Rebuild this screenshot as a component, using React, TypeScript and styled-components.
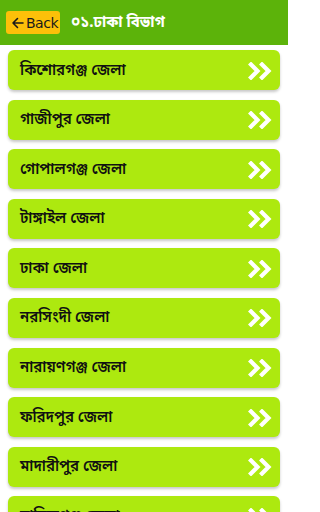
import React from 'react';
import styled, { createGlobalStyle } from 'styled-components';

const GlobalStyle = createGlobalStyle`
  html, body {
    margin: 0;
    padding: 0;
    background: #ffffff;
    font-family: "Noto Sans Bengali", "Noto Sans", "Liberation Sans", sans-serif;
  }
  #root {
    width: 288px;
    height: 512px;
    overflow: hidden;
  }
`;

const Header = styled.div`
  display: flex;
  align-items: center;
  height: 45px;
  padding: 0 6px;
  background: #5cb30a;
  box-sizing: border-box;
`;

const BackButton = styled.button`
  display: flex;
  align-items: center;
  gap: 2px;
  height: 23px;
  width: 54px;
  padding: 0 0 0 5px;
  border: none;
  border-radius: 3px;
  background: #fdc009;
  color: #1a1a1a;
  font-family: "DejaVu Sans", sans-serif;
  font-size: 14px;
  letter-spacing: -0.5px;
  cursor: pointer;
`;

const Title = styled.h1`
  margin: 0 0 0 11px;
  color: #ffffff;
  font-size: 15px;
  font-weight: 700;
`;

const List = styled.div`
  display: flex;
  flex-direction: column;
  gap: 9.6px;
  padding: 5px 8px 0;
`;

const Row = styled.div`
  display: flex;
  align-items: center;
  justify-content: space-between;
  height: 40px;
  padding: 1px 6px 0 12px;
  background: #ade90f;
  border-radius: 6px;
  box-shadow: 0 2px 3px rgba(0, 0, 0, 0.22);
  box-sizing: border-box;
  flex-shrink: 0;
`;

const Label = styled.span`
  color: #111111;
  font-size: 15px;
  font-weight: 600;
`;

const Arrow = () => (
  <svg width="13" height="12" viewBox="0 0 13 12" fill="none">
    <path d="M12 6 H2 M6.5 1.5 L2 6 L6.5 10.5" stroke="#1a1a1a" strokeWidth="1.6" strokeLinecap="round" strokeLinejoin="round" />
  </svg>
);

const Chevrons = () => (
  <svg width="26" height="18" viewBox="0 0 26 18" fill="none">
    <path d="M3 2.5 L9.5 9 L3 15.5" stroke="#fff" strokeWidth="4.2" strokeLinecap="square" />
    <path d="M14 2.5 L20.5 9 L14 15.5" stroke="#fff" strokeWidth="4.2" strokeLinecap="square" />
  </svg>
);

const districts = [
  'কিশোরগঞ্জ জেলা',
  'গাজীপুর জেলা',
  'গোপালগঞ্জ জেলা',
  'টাঙ্গাইল জেলা',
  'ঢাকা জেলা',
  'নরসিংদী জেলা',
  'নারায়ণগঞ্জ জেলা',
  'ফরিদপুর জেলা',
  'মাদারীপুর জেলা',
  'মানিকগঞ্জ জেলা',
];

export default function App() {
  return (
    <>
      <GlobalStyle />
      <Header>
        <BackButton>
          <Arrow />
          <span>Back</span>
        </BackButton>
        <Title>০১.ঢাকা বিভাগ</Title>
      </Header>
      <List>
        {districts.map((name) => (
          <Row key={name}>
            <Label>{name}</Label>
            <Chevrons />
          </Row>
        ))}
      </List>
    </>
  );
}
